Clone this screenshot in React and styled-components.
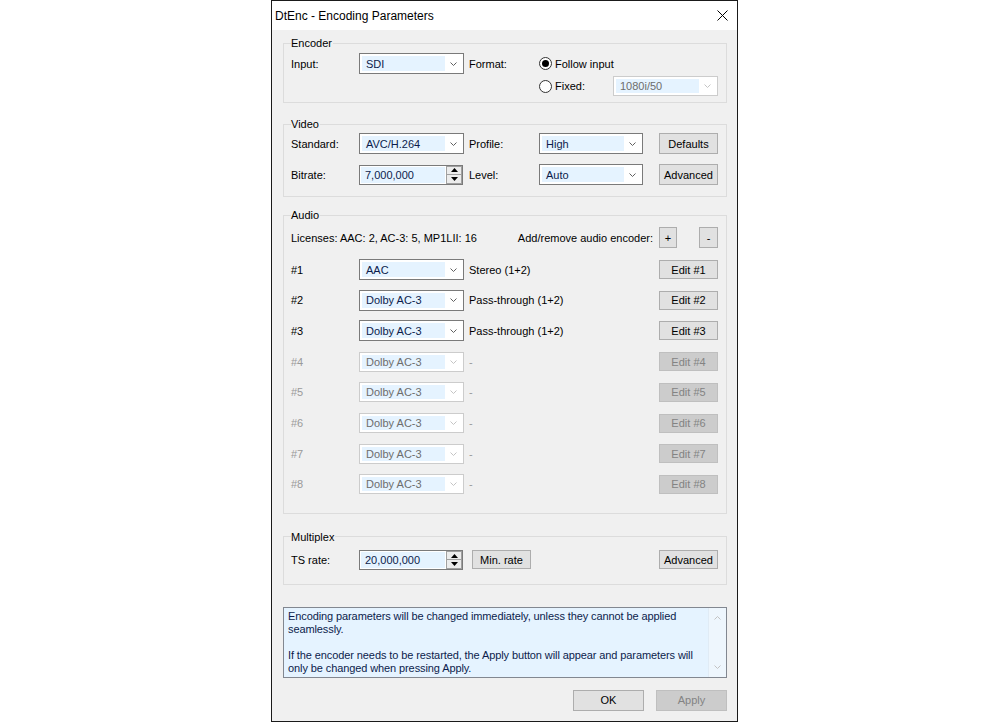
import React from 'react';
import styled, { createGlobalStyle } from 'styled-components';

const Global = createGlobalStyle`
  html, body { margin: 0; padding: 0; background: #ffffff; }
  body {
    font-family: "Liberation Sans", Arial, sans-serif;
    font-size: 11px;
    color: #000;
  }
  * { box-sizing: border-box; }
`;

const Page = styled.div`
  width: 1000px;
  height: 725px;
  padding-left: 271px;
  display: flex;
  align-items: flex-start;
`;

const Window = styled.div`
  width: 467px;
  height: 722px;
  border: 1px solid #1a1a1a;
  background: #f0f0f0;
  display: flex;
  flex-direction: column;
`;

const TitleBar = styled.div`
  height: 29px;
  background: #ffffff;
  display: flex;
  align-items: center;
  padding-left: 3px;
`;

const Title = styled.div`
  font-size: 12px;
  color: #000;
`;

const CloseBox = styled.div`
  margin-left: auto;
  width: 30px;
  height: 29px;
  display: flex;
  align-items: center;
  justify-content: center;
`;

const Client = styled.div`
  flex: 1;
  display: flex;
  flex-direction: column;
  padding: 6px 10px 0 11px;
`;

const Group = styled.fieldset`
  margin: ${p => p.$mt || 0}px 0 0 0;
  min-width: 0;
  border: 1px solid #dcdcdc;
  padding: ${p => p.$pt}px 8px ${p => p.$pb}px 7px;
`;

const Legend = styled.legend`
  padding: 0 1px 0 0;
  line-height: 14px;
  font-size: 11px;
`;

const FormGrid = styled.div`
  display: grid;
  grid-template-columns: ${p => p.$cols};
  grid-template-rows: ${p => p.$rows};
  row-gap: ${p => p.$gap}px;
  align-items: center;
`;

const Label = styled.div`
  white-space: nowrap;
  color: ${p => (p.$disabled ? '#9a9a9a' : '#000')};
  padding-left: ${p => p.$pl || 0}px;
  grid-column: ${p => p.$col || 'auto'};
`;

const ComboBox = styled.div`
  width: ${p => p.$w}px;
  height: ${p => p.$h}px;
  border: 1px solid ${p => (p.$disabled ? '#cccccc' : '#7a7a7a')};
  background: #ffffff;
  display: flex;
  padding: 2px 0 2px 2px;
  grid-column: ${p => p.$col || 'auto'};
`;

const ComboValue = styled.div`
  flex: 1;
  background: #e5f3ff;
  padding-left: 4px;
  display: flex;
  align-items: center;
  white-space: nowrap;
  color: ${p => (p.$disabled ? '#6d6d6d' : '#0c1c4c')};
`;

const ComboArrow = styled.div`
  width: 18px;
  display: flex;
  align-items: center;
  justify-content: center;
  padding-right: 2px;
`;

const Chevron = ({ color = '#606060', up = false }) => (
  <svg width="7" height="4" viewBox="0 0 7 4">
    <path
      d={up ? 'M0.5 3.5 L3.5 0.5 L6.5 3.5' : 'M0.5 0.5 L3.5 3.5 L6.5 0.5'}
      fill="none"
      stroke={color}
      strokeWidth="1"
    />
  </svg>
);

const Combo = ({ value, disabled, w = 105, h = 21, col }) => (
  <ComboBox $w={w} $h={h} $disabled={disabled} $col={col}>
    <ComboValue $disabled={disabled}>{value}</ComboValue>
    <ComboArrow>
      <Chevron color={disabled ? '#c4c4c4' : '#606060'} />
    </ComboArrow>
  </ComboBox>
);

const SpinBox = styled.div`
  width: 104px;
  height: 20px;
  border: 1px solid #7a7a7a;
  background: #ffffff;
  display: flex;
  padding: 1px 0 1px 1px;
`;

const SpinValue = styled.div`
  flex: 1;
  background: #e5f3ff;
  margin-right: 1px;
  padding-left: 4px;
  display: flex;
  align-items: center;
  color: #0c1c4c;
  white-space: nowrap;
`;

const SpinButtons = styled.div`
  width: 16px;
  margin-top: -1px;
  margin-bottom: -1px;
  border: 1px solid #a0a0a0;
  background: #ececec;
  display: flex;
  flex-direction: column;
`;

const SpinHalf = styled.div`
  flex: 1;
  display: flex;
  align-items: center;
  justify-content: center;
  border-top: ${p => (p.$lower ? '1px solid #a0a0a0' : 'none')};
`;

const Spin = ({ value }) => (
  <SpinBox>
    <SpinValue>{value}</SpinValue>
    <SpinButtons>
      <SpinHalf>
        <svg width="7" height="4" viewBox="0 0 7 4"><path d="M0 4 L3.5 0 L7 4 Z" fill="#000" /></svg>
      </SpinHalf>
      <SpinHalf $lower>
        <svg width="7" height="4" viewBox="0 0 7 4"><path d="M0 0 L3.5 4 L7 0 Z" fill="#000" /></svg>
      </SpinHalf>
    </SpinButtons>
  </SpinBox>
);

const Button = styled.button`
  width: ${p => p.$w}px;
  height: ${p => p.$h || 21}px;
  border: 1px solid ${p => (p.disabled ? '#bfbfbf' : '#adadad')};
  background: ${p => (p.disabled ? '#cccccc' : '#e1e1e1')};
  color: ${p => (p.disabled ? '#838383' : '#000')};
  font: inherit;
  font-size: 11px;
  padding: 0;
  margin: 0 0 0 ${p => p.$ml || 0}px;
  justify-self: ${p => p.$justify || 'start'};
  grid-column: ${p => p.$col || 'auto'};
  white-space: nowrap;
`;

const RadioWrap = styled.div`
  display: flex;
  align-items: center;
  gap: 3px;
  white-space: nowrap;
  grid-column: ${p => p.$col || 'auto'};
`;

const RadioCircle = styled.div`
  width: 13px;
  height: 13px;
  border-radius: 50%;
  border: 1px solid #333333;
  background: #ffffff;
  display: flex;
  align-items: center;
  justify-content: center;
`;

const RadioDot = styled.div`
  width: 7px;
  height: 7px;
  border-radius: 50%;
  background: #000;
`;

const Radio = ({ checked, label, col }) => (
  <RadioWrap $col={col}>
    <RadioCircle>{checked && <RadioDot />}</RadioCircle>
    <span>{label}</span>
  </RadioWrap>
);

const FixedRow = styled.div`
  grid-column: 4;
  display: flex;
  align-items: center;
  justify-content: space-between;
`;

const LicenseRow = styled.div`
  height: 21px;
  display: flex;
  align-items: center;
  margin-bottom: 11px;
`;

const AddRemove = styled.span`
  margin-left: auto;
  margin-right: 6px;
`;

const InfoBox = styled.div`
  margin-top: 22px;
  height: 71px;
  border: 1px solid #828790;
  background: #e5f3ff;
  display: flex;
`;

const InfoText = styled.div`
  flex: 1;
  padding: 2px 4px;
  line-height: 13px;
  letter-spacing: -0.1px;
  color: #0c1c4c;
  white-space: nowrap;
  overflow: hidden;
`;

const ScrollBar = styled.div`
  width: 18px;
  background: #eef6fd;
  border-left: 1px solid #e0ebf5;
  display: flex;
  flex-direction: column;
  align-items: center;
  justify-content: space-between;
  padding: 8px 0 8px;
`;

const ButtonRow = styled.div`
  margin-top: 12px;
  display: flex;
  justify-content: flex-end;
  gap: 12px;
`;

const audioRows = [
  { n: '#1', v: 'AAC', s: 'Stereo (1+2)', on: true },
  { n: '#2', v: 'Dolby AC-3', s: 'Pass-through (1+2)', on: true },
  { n: '#3', v: 'Dolby AC-3', s: 'Pass-through (1+2)', on: true },
  { n: '#4', v: 'Dolby AC-3', s: '-', on: false },
  { n: '#5', v: 'Dolby AC-3', s: '-', on: false },
  { n: '#6', v: 'Dolby AC-3', s: '-', on: false },
  { n: '#7', v: 'Dolby AC-3', s: '-', on: false },
  { n: '#8', v: 'Dolby AC-3', s: '-', on: false },
];

export default function App() {
  return (
    <>
      <Global />
      <Page>
        <Window>
          <TitleBar>
            <Title>DtEnc - Encoding Parameters</Title>
            <CloseBox>
              <svg width="11" height="11" viewBox="0 0 11 11">
                <path d="M0.5 0.5 L10.5 10.5 M10.5 0.5 L0.5 10.5" stroke="#000" strokeWidth="1" fill="none" />
              </svg>
            </CloseBox>
          </TitleBar>
          <Client>
            <Group $pt={3} $pb={6}>
              <Legend>Encoder</Legend>
              <FormGrid $cols="68px 105px 75px 1fr" $rows="21px 20px" $gap={2}>
                <Label>Input:</Label>
                <Combo value="SDI" />
                <Label $pl={5}>Format:</Label>
                <Radio checked label="Follow input" />
                <FixedRow>
                  <Radio label="Fixed:" />
                  <Combo value="1080i/50" disabled h={20} />
                </FixedRow>
              </FormGrid>
            </Group>

            <Group $mt={14} $pt={2} $pb={11}>
              <Legend>Video</Legend>
              <FormGrid $cols="68px 105px 75px 104px 1fr" $rows="21px 21px" $gap={10}>
                <Label>Standard:</Label>
                <Combo value="AVC/H.264" />
                <Label $pl={5}>Profile:</Label>
                <Combo value="High" w={104} />
                <Button $w={59} $justify="end">Defaults</Button>
                <Label>Bitrate:</Label>
                <Spin value="7,000,000" />
                <Label $pl={5}>Level:</Label>
                <Combo value="Auto" w={104} />
                <Button $w={59} $justify="end">Advanced</Button>
              </FormGrid>
            </Group>

            <Group $mt={11} $pt={5} $pb={18}>
              <Legend>Audio</Legend>
              <LicenseRow>
                <span>Licenses: AAC: 2, AC-3: 5, MP1LII: 16</span>
                <AddRemove>Add/remove audio encoder:</AddRemove>
                <Button $w={18}>+</Button>
                <Button $w={19} $ml={22}>-</Button>
              </LicenseRow>
              <FormGrid $cols="68px 105px 1fr 59px" $rows="repeat(8, 21px)" $gap={9.714}>
                {audioRows.map(r => (
                  <React.Fragment key={r.n}>
                    <Label $disabled={!r.on}>{r.n}</Label>
                    <Combo value={r.v} disabled={!r.on} h={r.on ? 21 : 20} />
                    <Label $pl={5} $disabled={!r.on}>{r.s}</Label>
                    <Button $w={59} $h={19} disabled={!r.on}>Edit {r.n}</Button>
                  </React.Fragment>
                ))}
              </FormGrid>
            </Group>

            <Group $mt={16} $pt={6} $pb={14}>
              <Legend>Multiplex</Legend>
              <FormGrid $cols="68px 104px 1fr 59px" $rows="20px" $gap={0}>
                <Label>TS rate:</Label>
                <Spin value="20,000,000" />
                <Button $w={59} $h={19} $ml={9}>Min. rate</Button>
                <Button $w={59} $h={19}>Advanced</Button>
              </FormGrid>
            </Group>

            <InfoBox>
              <InfoText>
                Encoding parameters will be changed immediately, unless they cannot be applied
                <br />
                seamlessly.
                <br />
                <br />
                If the encoder needs to be restarted, the Apply button will appear and parameters will
                <br />
                only be changed when pressing Apply.
              </InfoText>
              <ScrollBar>
                <Chevron color="#c2c2c2" up />
                <Chevron color="#c2c2c2" />
              </ScrollBar>
            </InfoBox>

            <ButtonRow>
              <Button $w={71}>OK</Button>
              <Button $w={71} disabled>Apply</Button>
            </ButtonRow>
          </Client>
        </Window>
      </Page>
    </>
  );
}
